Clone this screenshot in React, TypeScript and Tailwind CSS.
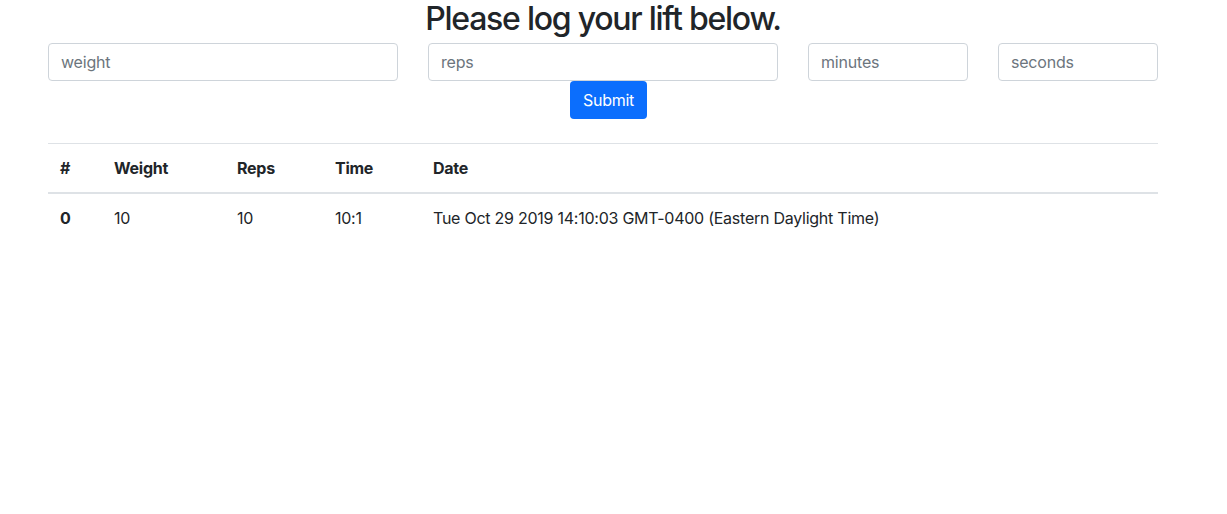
import React from "react";

export default function App() {
  const font = { fontFamily: "Inter, 'Noto Sans', sans-serif" };
  const inputCls =
    "h-[38px] rounded-[4px] border border-[#ced4da] bg-white px-3 text-[16px] tracking-[-0.2px] text-[#495057] placeholder:text-[#6c757d] outline-none";
  return (
    <div className="min-h-[514px] w-[1227px] bg-white text-[#212529] tracking-[-0.25px]" style={font}>
      <div className="ml-[48px] w-[1110px]">
        <h2 className="text-center text-[32px] font-medium leading-[38px] tracking-[-1.25px]">
          Please log your lift below.
        </h2>
        <div className="mt-[5px] flex gap-[30px]">
          <input className={`${inputCls} w-[350px]`} placeholder="weight" />
          <input className={`${inputCls} w-[350px]`} placeholder="reps" />
          <input className={`${inputCls} w-[160px]`} placeholder="minutes" />
          <input className={`${inputCls} w-[160px]`} placeholder="seconds" />
        </div>
        <div className="ml-[522px]">
          <button className="h-[38px] w-[77px] rounded-[4px] bg-[#0b6efd] text-[16px] text-white">
            Submit
          </button>
        </div>
        <table className="mt-[24px] w-full border-collapse text-left text-[16px]">
          <thead>
            <tr className="border-t border-[#dee2e6]">
              <th className="w-[54px] border-b-2 border-[#dee2e6] px-3 py-3 font-bold leading-6">#</th>
              <th className="w-[123px] border-b-2 border-[#dee2e6] px-3 py-3 font-bold leading-6">Weight</th>
              <th className="w-[98px] border-b-2 border-[#dee2e6] px-3 py-3 font-bold leading-6">Reps</th>
              <th className="w-[98px] border-b-2 border-[#dee2e6] px-3 py-3 font-bold leading-6">Time</th>
              <th className="border-b-2 border-[#dee2e6] px-3 py-3 font-bold leading-6">Date</th>
            </tr>
          </thead>
          <tbody>
            <tr>
              <td className="px-3 py-3 font-bold leading-6">0</td>
              <td className="px-3 py-3 leading-6">10</td>
              <td className="px-3 py-3 leading-6">10</td>
              <td className="px-3 py-3 leading-6">10:1</td>
              <td className="px-3 py-3 leading-6">Tue Oct 29 2019 14:10:03 GMT-0400 (Eastern Daylight Time)</td>
            </tr>
          </tbody>
        </table>
      </div>
    </div>
  );
}
